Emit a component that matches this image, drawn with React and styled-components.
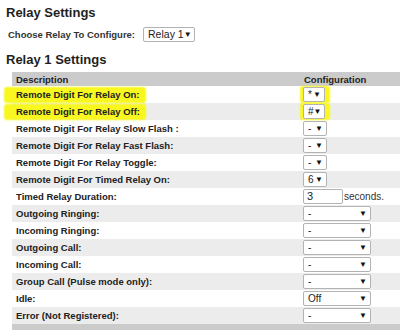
import React from "react";
import styled, { createGlobalStyle } from "styled-components";

const GlobalStyle = createGlobalStyle`
  body {
    margin: 0;
    background: #fff;
    font-family: "Liberation Sans", Arial, sans-serif;
    color: #222;
  }
`;

const rows = [
  { label: "Remote Digit For Relay On:", kind: "small", value: "*", marked: true },
  { label: "Remote Digit For Relay Off:", kind: "small", value: "#", marked: true },
  { label: "Remote Digit For Relay Slow Flash :", kind: "small", value: "-" },
  { label: "Remote Digit For Relay Fast Flash:", kind: "small", value: "-" },
  { label: "Remote Digit For Relay Toggle:", kind: "small", value: "-" },
  { label: "Remote Digit For Timed Relay On:", kind: "small", value: "6" },
  { label: "Timed Relay Duration:", kind: "input", value: "3" },
  { label: "Outgoing Ringing:", kind: "wide", value: "-" },
  { label: "Incoming Ringing:", kind: "wide", value: "-" },
  { label: "Outgoing Call:", kind: "wide", value: "-" },
  { label: "Incoming Call:", kind: "wide", value: "-" },
  { label: "Group Call (Pulse mode only):", kind: "wide", value: "-" },
  { label: "Idle:", kind: "wide", value: "Off" },
  { label: "Error (Not Registered):", kind: "wide", value: "-" },
];

export default function App() {
  return (
    <>
      <GlobalStyle />
      <Page>
        <Title>Relay Settings</Title>
        <ChooseRow>
          <span>Choose Relay To Configure:</span>
          <Select $width={52} $size={10.5}>
            <span>Relay 1</span>
            <Arrow>▼</Arrow>
          </Select>
        </ChooseRow>
        <Title $sub>Relay 1 Settings</Title>
        <Table>
          <thead>
            <tr>
              <HeadCell>Description</HeadCell>
              <HeadCell $config>Configuration</HeadCell>
            </tr>
          </thead>
          <tbody>
            {rows.map((r, i) => (
              <Row key={r.label} $alt={i % 2 === 1}>
                <Cell>
                  {r.marked ? <Marker>{r.label}</Marker> : r.label}
                </Cell>
                <ConfigCell>
                  {r.kind === "input" ? (
                    <InputLine>
                      <TextBox>{r.value}</TextBox>
                      <Unit>seconds.</Unit>
                    </InputLine>
                  ) : r.marked ? (
                    <SelectMark>
                      <Select $width={22}>
                        <span>{r.value}</span>
                        <Arrow>▼</Arrow>
                      </Select>
                    </SelectMark>
                  ) : (
                    <Select $width={r.kind === "wide" ? 68 : 24}>
                      <span>{r.value}</span>
                      <Arrow>▼</Arrow>
                    </Select>
                  )}
                </ConfigCell>
              </Row>
            ))}
            <FootRow>
              <td colSpan={2} />
            </FootRow>
          </tbody>
        </Table>
      </Page>
    </>
  );
}

const Page = styled.div`
  padding: 5px 0 0 6px;
  width: 394px;
  height: 325px;
  overflow: hidden;
`;

const Title = styled.h2`
  margin: ${({ $sub }) => ($sub ? "10px 0 0 0" : "0")};
  font-size: 13px;
  line-height: 15px;
  font-weight: 700;
  color: #1f1f1f;
`;

const ChooseRow = styled.div`
  display: flex;
  align-items: center;
  gap: 8px;
  margin-top: 7px;
  padding-left: 2px;
  font-size: 9.5px;
  font-weight: 700;
  color: #333;
`;

const Select = styled.div`
  box-sizing: border-box;
  display: inline-flex;
  align-items: center;
  justify-content: space-between;
  width: ${({ $width }) => $width}px;
  height: 15px;
  padding: 0 3px 0 4px;
  background: #fff;
  border: 1px solid #b3b3b3;
  border-radius: 2px;
  font-size: ${({ $size }) => $size || 10}px;
  font-weight: 400;
  color: #222;
  line-height: 13px;
  white-space: nowrap;
`;

const Arrow = styled.span`
  font-size: 8px;
  color: #111;
`;

const SelectMark = styled.span`
  display: inline-flex;
  margin-left: -2px;
  padding: 0 4px 0 2px;
  background: #f8f820;
  border-radius: 2px;
  box-shadow: 0 0 2px 1px #f8f820;
`;

const Table = styled.table`
  margin: 5px 0 0 6px;
  width: 400px;
  border-collapse: collapse;
  font-size: 9.5px;
  font-weight: 700;
`;

const HeadCell = styled.th`
  height: 14px;
  padding: 0 0 0 ${({ $config }) => ($config ? 3 : 4)}px;
  width: ${({ $config }) => ($config ? "auto" : "285px")};
  background: #cbcbcb;
  text-align: left;
  font-weight: 700;
  color: #222;
`;

const Row = styled.tr`
  height: 17px;
  background: ${({ $alt }) => ($alt ? "#ececec" : "#fff")};
`;

const Cell = styled.td`
  padding: 0 0 0 4px;
  color: #222;
  white-space: nowrap;
`;

const ConfigCell = styled.td`
  padding: 0 0 0 2px;
  line-height: 0;
`;

const Marker = styled.span`
  display: inline-block;
  margin-left: -11px;
  padding: 0 5px 0 11px;
  line-height: 14px;
  background: #f8f820;
  border-radius: 2px;
  box-shadow: 0 0 2px 1px #f8f820;
`;

const InputLine = styled.span`
  display: inline-flex;
  align-items: center;
  gap: 1px;
`;

const TextBox = styled.span`
  box-sizing: border-box;
  display: inline-flex;
  align-items: center;
  width: 40px;
  height: 15px;
  padding-left: 3px;
  border: 1px solid #b3b3b3;
  border-radius: 2px;
  font-size: 11px;
  font-weight: 400;
  line-height: 13px;
`;

const Unit = styled.span`
  font-size: 10px;
  font-weight: 400;
  color: #333;
  line-height: 13px;
`;

const FootRow = styled.tr`
  height: 12px;
  background: #cbcbcb;
`;
